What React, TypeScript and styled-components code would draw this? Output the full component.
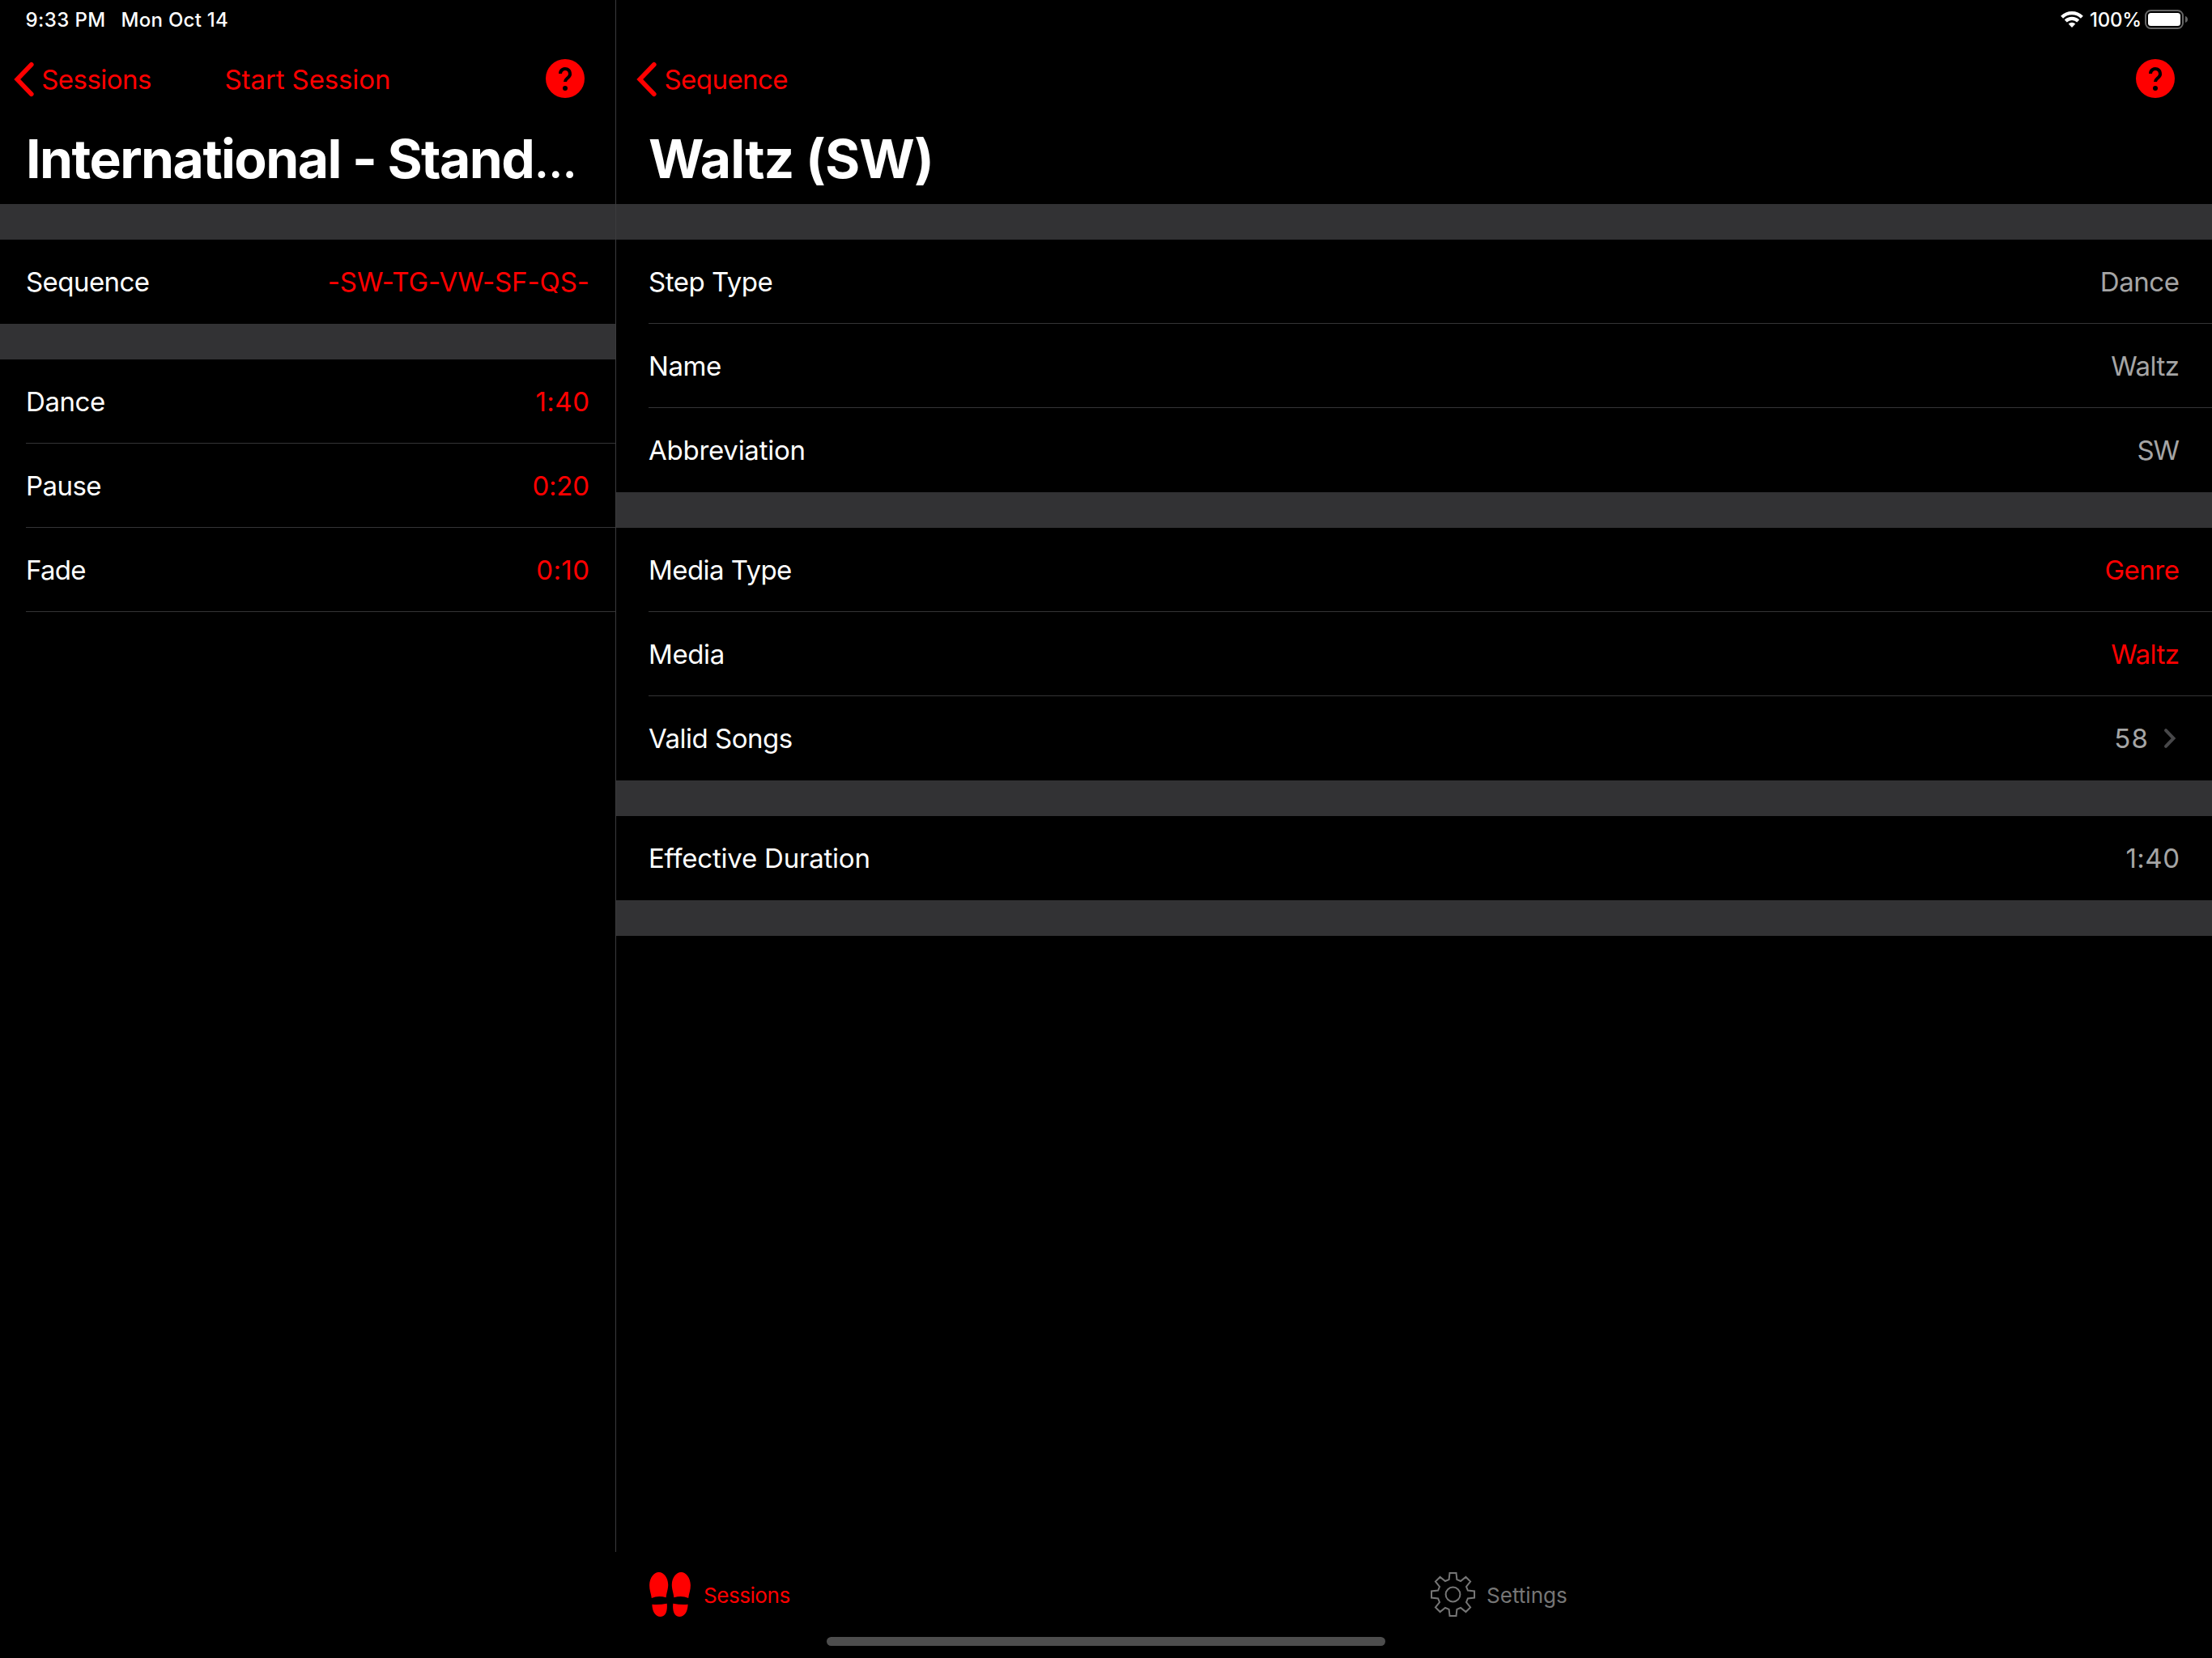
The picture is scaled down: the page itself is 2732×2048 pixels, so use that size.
import React from "react";
import styled, { createGlobalStyle } from "styled-components";

const RED = "#ff0000";
const GRAY = "#a5a5a5";

const GlobalStyle = createGlobalStyle`
  html, body, #root { margin: 0; height: 100%; background: #000; }
  body { font-family: Inter, "Liberation Sans", sans-serif; color: #fff; overflow: hidden; }
  * { box-sizing: border-box; }
`;

const Screen = styled.div`
  display: flex;
  flex-direction: column;
  width: 2732px;
  height: 2048px;
  background: #000;
`;

const Split = styled.div`
  display: flex;
  height: 1917px;
`;

const Pane = styled.section<{ $width?: number }>`
  display: flex;
  flex-direction: column;
  flex: ${(p) => (p.$width ? `0 0 ${p.$width}px` : "1 1 0")};
  min-width: 0;
`;

const Divider = styled.div`
  flex: 0 0 1px;
  background: #3b3b3d;
`;

const StatusBar = styled.div<{ $end?: boolean }>`
  display: flex;
  align-items: center;
  justify-content: ${(p) => (p.$end ? "flex-end" : "flex-start")};
  height: 48px;
  padding: 0 30px 0 31.500px;
  font-size: 24px;
  font-weight: 500;
`;

const Text = styled.span<{ $tracking: number }>`
  white-space: pre;
  letter-spacing: ${(p) => p.$tracking}px;
  margin-right: ${(p) => -p.$tracking}px;
`;

const StatusDate = styled(Text)`
  padding-left: 19.500px;
`;

const BatteryText = styled(Text)`
  padding: 0 4px 0 8px;
`;

const NavBar = styled.nav<{ $left: number; $right: number }>`
  display: grid;
  grid-template-columns: 1fr auto 1fr;
  align-items: center;
  height: 100px;
  padding: 0 ${(p) => p.$right}px 0 ${(p) => p.$left}px;
  color: ${RED};
  font-size: 33px;
`;

const BackButton = styled.a`
  display: flex;
  align-items: center;
  gap: 7.2px;
`;

const HelpButton = styled.a`
  display: flex;
  justify-self: end;
  grid-column: 3;
  padding-bottom: 2px;
`;

const CenterAction = styled.a<{ $shift: number }>`
  margin-left: ${(p) => p.$shift}px;
`;

const Title = styled.h1<{ $left: number }>`
  display: flex;
  align-items: center;
  height: 104px;
  margin: 0;
  padding: 0 0 8px ${(p) => p.$left}px;
  font-size: 66px;
  font-weight: 700;
`;

const Ellipsis = styled.span`
  font-size: 52px;
  line-height: 1;
  letter-spacing: 0;
  margin-left: 1px;
`;

const Band = styled.div`
  flex: 0 0 44px;
  background: #323234;
`;

const Row = styled.div<{ $left: number; $right: number; $separator?: boolean }>`
  display: flex;
  align-items: center;
  justify-content: space-between;
  flex: 0 0 104px;
  margin-left: ${(p) => p.$left}px;
  padding-right: ${(p) => p.$right}px;
  font-size: 33px;
  box-shadow: ${(p) => (p.$separator ? "inset 0 -1px 0 #343436" : "none")};
`;

const Value = styled.span<{ $accent?: boolean }>`
  display: flex;
  align-items: center;
  color: ${(p) => (p.$accent ? RED : GRAY)};
`;

const Disclosure = styled.svg`
  margin: 0 4px 0 19px;
`;

const TabBar = styled.footer`
  display: flex;
  height: 105px;
  padding-left: 802px;
`;

const Tab = styled.a<{ $active?: boolean; $width: number; $gap: number }>`
  display: flex;
  align-items: center;
  gap: ${(p) => p.$gap}px;
  flex: 0 0 ${(p) => p.$width}px;
  color: ${(p) => (p.$active ? RED : "#767676")};
  font-size: 26px;
`;

const TabLabel = styled(Text)`
  padding-top: 2px;
`;

const HomeIndicator = styled.div`
  align-self: center;
  width: 690px;
  height: 11px;
  border-radius: 5.5px;
  background: #4d4d4d;
`;

const BackChevron = () => (
  <svg width="28" height="44" viewBox="0 0 28 44" fill="none">
    <path d="M22.800 3.8 5.2 22l17.6 18.2" stroke={RED} strokeWidth="5.6" strokeLinecap="round" />
  </svg>
);

const HelpIcon = () => (
  <svg width="48" height="48" viewBox="0 0 48 48" fill="none">
    <circle cx="24" cy="24" r="24" fill={RED} />
    <path d="M18 18a6 6 0 1 1 10.3 4.2C26.2 24.4 24 25.2 24 28" stroke="#000" strokeWidth="4" />
    <circle cx="24" cy="36" r="3" fill="#000" />
  </svg>
);

const WifiIcon = () => (
  <svg width="28" height="20" viewBox="0 0 28 20" fill="none">
    <path d="M1.6 7.2A17.8 17.8 0 0 1 26.4 7.2M6.3 12A11.1 11.1 0 0 1 21.7 12" stroke="#fff" strokeWidth="4.2" />
    <path d="M14 20 9.7 15.5A6.2 6.2 0 0 1 18.3 15.5Z" fill="#fff" />
  </svg>
);

const BatteryIcon = () => (
  <svg width="53" height="24" viewBox="0 0 53 24" fill="none">
    <rect x="1" y="1" width="46" height="22" rx="6.5" stroke="#666" strokeWidth="2" />
    <rect x="4" y="4" width="40" height="16" rx="3.5" fill="#fff" />
    <path d="M50 8c2 .6 3 2.2 3 4s-1 3.4-3 4z" fill="#666" />
  </svg>
);

const SOLE = "M11.8 0C18 0 23 7 23.2 15C23.4 20.5 21.5 24 20.6 31.3Q11 28.6 2.8 32C2 26 0 22 .1 16C.3 7 5.5 0 11.8 0Z";
const HEEL = "M3.4 39.8Q12 40.6 21.7 38.8C22.6 47 20.5 55 14 55C7 55 3.5 48 3.4 39.8Z";

const ShoesIcon = () => (
  <svg width="51" height="55" viewBox="0 0 51 55" fill={RED}>
    <path d={SOLE + HEEL} />
    <path d={SOLE + HEEL} transform="matrix(-1 0 0 1 51 0)" />
  </svg>
);

const TOOTH = [[-4.9, -18.4], [-4.0, -26.5], [4.0, -26.5], [4.9, -18.4]];
const gearPoints = Array.from({ length: 8 }, (_, i) => {
  const a = (i * Math.PI) / 4;
  return TOOTH.map(([x, y]) => {
    const px = 27.5 + x * Math.cos(a) - y * Math.sin(a);
    const py = 27.5 + x * Math.sin(a) + y * Math.cos(a);
    return `${px.toFixed(2)},${py.toFixed(2)}`;
  }).join(" ");
}).join(" ");

const GearIcon = () => (
  <svg width="55" height="55" viewBox="0 0 55 55" fill="none" stroke="#767676" strokeWidth="2">
    <polygon points={gearPoints} />
    <circle cx="27.5" cy="27.5" r="8.9" />
  </svg>
);

type Item = {
  label: string;
  value: string;
  tracking: [number, number];
  accent?: boolean;
  disclosure?: boolean;
  separator?: boolean;
};

const sessionGroups: Item[][] = [
  [{ label: "Sequence", value: "-SW-TG-VW-SF-QS-", tracking: [-0.55, -0.09], accent: true }],
  [
    { label: "Dance", value: "1:40", tracking: [-0.42, 0.5], accent: true, separator: true },
    { label: "Pause", value: "0:20", tracking: [-0.55, -0.22], accent: true, separator: true },
    { label: "Fade", value: "0:10", tracking: [-0.7, 0.42], accent: true, separator: true },
  ],
];

const stepGroups: Item[][] = [
  [
    { label: "Step Type", value: "Dance", tracking: [-0.48, -0.42], separator: true },
    { label: "Name", value: "Waltz", tracking: [-0.4, -0.5], separator: true },
    { label: "Abbreviation", value: "SW", tracking: [-0.26, -1.2] },
  ],
  [
    { label: "Media Type", value: "Genre", tracking: [-0.55, -0.48], accent: true, separator: true },
    { label: "Media", value: "Waltz", tracking: [-0.4, -0.5], accent: true, separator: true },
    { label: "Valid Songs", value: "58", tracking: [-0.5, 1.2], disclosure: true },
  ],
  [{ label: "Effective Duration", value: "1:40", tracking: [-0.22, 0.5] }],
];

const Groups = ({ groups, left, right }: { groups: Item[][]; left: number; right: number }) => (
  <>
    {groups.map((group, i) => (
      <React.Fragment key={i}>
        <Band />
        {group.map((item) => (
          <Row key={item.label} $left={left} $right={right} $separator={item.separator}>
            <Text $tracking={item.tracking[0]}>{item.label}</Text>
            <Value $accent={item.accent}>
              <Text $tracking={item.tracking[1]}>{item.value}</Text>
              {item.disclosure && (
                <Disclosure width="16" height="26" viewBox="0 0 16 26" fill="none">
                  <path d="M3 3.2 12.5 13 3 22.8" stroke="#48484a" strokeWidth="4" strokeLinecap="round" />
                </Disclosure>
              )}
            </Value>
          </Row>
        ))}
      </React.Fragment>
    ))}
  </>
);

export default function App() {
  return (
    <Screen>
      <GlobalStyle />
      <Split>
        <Pane $width={760}>
          <StatusBar>
            <Text $tracking={0.4}>9:33 PM</Text>
            <StatusDate $tracking={0.27}>Mon Oct 14</StatusDate>
          </StatusBar>
          <NavBar $left={16} $right={38}>
            <BackButton>
              <BackChevron />
              <Text $tracking={-0.52}>Sessions</Text>
            </BackButton>
            <CenterAction $shift={22}>
              <Text $tracking={-0.11}>Start Session</Text>
            </CenterAction>
            <HelpButton>
              <HelpIcon />
            </HelpButton>
          </NavBar>
          <Title $left={32}>
            <Text $tracking={-1.55}>
              International - Stand<Ellipsis>…</Ellipsis>
            </Text>
          </Title>
          <Groups groups={sessionGroups} left={32} right={32} />
        </Pane>
        <Divider />
        <Pane>
          <StatusBar $end>
            <WifiIcon />
            <BatteryText $tracking={-0.25}>100%</BatteryText>
            <BatteryIcon />
          </StatusBar>
          <NavBar $left={24.3} $right={46}>
            <BackButton>
              <BackChevron />
              <Text $tracking={-0.55}>Sequence</Text>
            </BackButton>
            <HelpButton>
              <HelpIcon />
            </HelpButton>
          </NavBar>
          <Title $left={40}>
            <Text $tracking={-0.9}>Waltz (SW)</Text>
          </Title>
          <Groups groups={stepGroups} left={40} right={40} />
          <Band />
        </Pane>
      </Split>
      <TabBar>
        <Tab $active $width={965} $gap={16}>
          <ShoesIcon />
          <TabLabel $tracking={-0.45}>Sessions</TabLabel>
        </Tab>
        <Tab $width={965} $gap={14}>
          <GearIcon />
          <TabLabel $tracking={0.03}>Settings</TabLabel>
        </Tab>
      </TabBar>
      <HomeIndicator />
    </Screen>
  );
}
